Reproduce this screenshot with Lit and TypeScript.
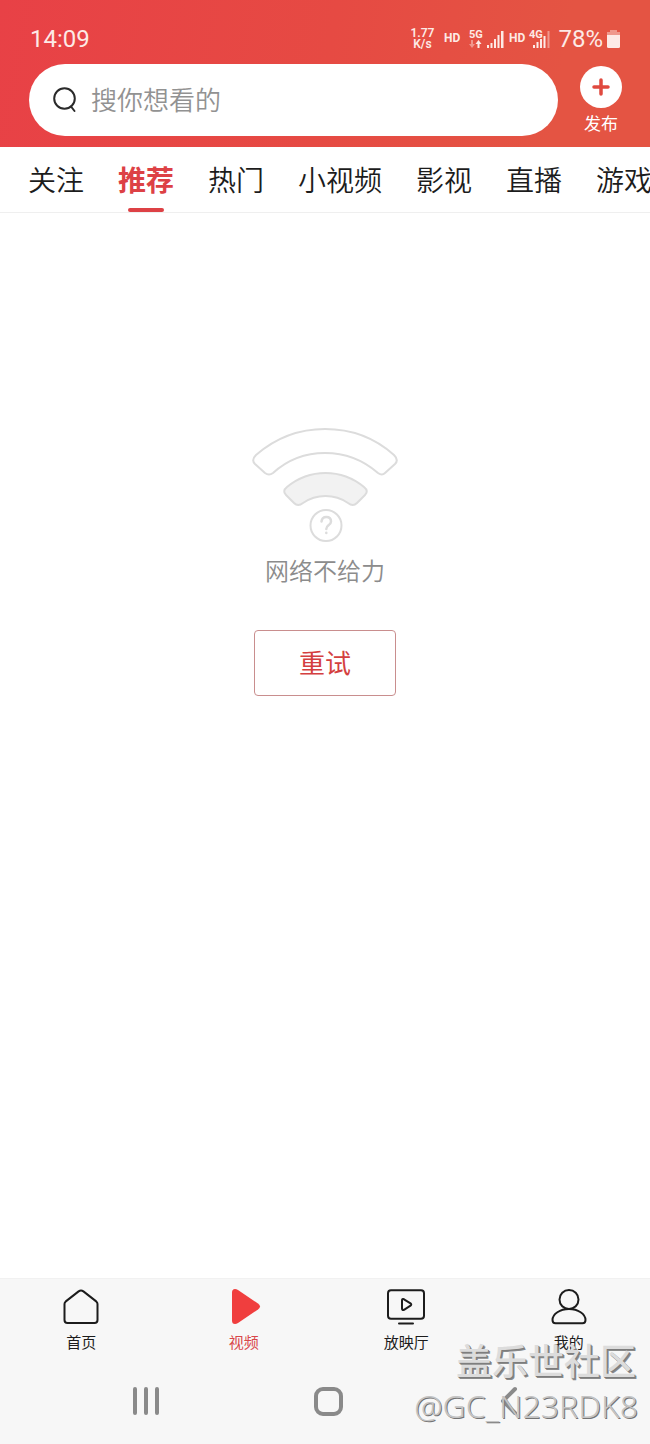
import { LitElement, html, css, svg } from "lit";
import { customElement, state } from "lit/decorators.js";
import { classMap } from "lit/directives/class-map.js";

const CHANNELS = ["关注", "推荐", "热门", "小视频", "影视", "直播", "游戏"];

const NAV_ITEMS = [
  {
    label: "首页",
    icon: svg`<path d="M17.6 3.4 Q20 1.6 22.4 3.4 L35.2 13.4 Q36.5 14.5 36.5 16 V32 Q36.5 35 33.5 35 H6.500 Q3.500 35 3.500 32 V16 Q3.500 14.500 4.800 13.400 Z"/>`,
  },
  {
    label: "视频",
    icon: svg`<path class="solid" d="M8 4.500 Q8 1 11 1 Q12.400 1 14 2 L34 15.500 Q38 18.500 34 21.500 L14 35 Q12.400 36 11 36 Q8 36 8 32.500 Z"/>`,
  },
  {
    label: "放映厅",
    icon: svg`<rect x="2" y="2.200" width="36" height="28.600" rx="3"/><path d="M16 12.500 Q16 10.500 18 11.300 L24.500 15.300 Q26 16.500 24.500 17.700 L18 21.800 Q16 22.500 16 20.500 Z M13 35.500 H27"/>`,
  },
  {
    label: "我的",
    icon: svg`<circle cx="20" cy="11.500" r="9.500"/><path d="M20 21 C29 21 36.500 26 36.500 32 Q36.500 35.200 33.500 35.200 H6.500 Q3.500 35.200 3.500 32 C3.500 26 11 21 20 21 Z"/>`,
  },
];

@customElement("app-root")
export class AppRoot extends LitElement {
  static styles = css`
    :host {
      display: flex;
      flex-direction: column;
      position: relative;
      min-height: 100vh;
      background: #fff;
      color: #1c1c1c;
      font-family: Roboto, "Noto Sans CJK SC", sans-serif;
      overflow: hidden;
    }
    * {
      box-sizing: border-box;
    }
    button {
      margin: 0;
      padding: 0;
      border: 0;
      background: none;
      color: inherit;
      font: inherit;
      cursor: pointer;
    }
    svg {
      display: block;
      flex: none;
    }
    .header {
      background: linear-gradient(100deg, #e84146 0%, #e64a43 50%, #e45443 85%);
      color: #fff;
      padding-bottom: 11px;
    }
    .status {
      display: flex;
      align-items: center;
      justify-content: space-between;
      height: 64px;
      padding: 14px 30px 0;
      font-size: 24px;
      line-height: 28px;
      color: #fdeae6;
    }
    .indicators {
      display: flex;
      align-items: center;
    }
    .speed {
      display: flex;
      flex-direction: column;
      width: 24px;
      margin-right: 10px;
      font-size: 12px;
      font-weight: 600;
      line-height: 11px;
      text-align: center;
    }
    .percent {
      margin: 0 4px 0 7px;
    }
    .cell {
      fill: #fdeae6;
      font: 700 12px Roboto, sans-serif;
    }
    .cell .gen {
      font-size: 11px;
    }
    .dim {
      opacity: 0.45;
    }
    .toolbar {
      display: flex;
      align-items: center;
      gap: 18px;
      padding: 0 24px 0 29px;
    }
    .search {
      display: flex;
      flex: 1;
      align-items: center;
      gap: 12px;
      height: 72px;
      padding: 0 24px 2px;
      border-radius: 36px;
      background: #fff;
      min-width: 0;
    }
    .search svg {
      fill: none;
      stroke: #2a2a2a;
      stroke-width: 2;
      stroke-linecap: round;
    }
    .search input {
      flex: 1;
      min-width: 0;
      padding: 0;
      border: 0;
      outline: 0;
      background: none;
      color: #1c1c1c;
      font: 350 26px/40px "Noto Sans CJK SC", sans-serif;
    }
    .search input::placeholder {
      color: #929292;
      opacity: 1;
    }
    .publish {
      display: flex;
      flex-direction: column;
      align-items: center;
      gap: 5px;
      width: 50px;
      font-size: 17px;
      line-height: 22px;
    }
    .tabs {
      display: flex;
      gap: 34px;
      padding: 0 28px;
      height: 66px;
      border-bottom: 1px solid #efefef;
      overflow: hidden;
    }
    .tab {
      display: flex;
      flex: none;
      flex-direction: column;
      align-items: center;
      justify-content: space-between;
      padding-top: 15px;
      font-size: 28px;
      font-weight: 350;
      line-height: 40px;
      white-space: nowrap;
    }
    .tab::after {
      content: "";
      width: 36px;
      height: 4px;
      border-radius: 2px;
    }
    .tab.active {
      color: #dd4145;
      font-weight: 700;
    }
    .tab.active::after {
      background: #dd4145;
    }
    .content {
      display: flex;
      flex: 1;
      flex-direction: column;
      align-items: center;
      padding-top: 213px;
    }
    .offline {
      fill: none;
      stroke: #dcdcdc;
      stroke-width: 2;
      stroke-linecap: round;
      stroke-linejoin: round;
    }
    .offline .shade {
      fill: #f2f2f2;
    }
    .message {
      margin: 10px 0 40px;
      color: #8c8c8c;
      font-size: 24px;
      font-weight: 350;
      line-height: 36px;
    }
    .retry {
      width: 142px;
      height: 66px;
      padding-top: 2px;
      border: 1px solid #c98e8e;
      border-radius: 4px;
      color: #d43f40;
      font-size: 26px;
      line-height: 40px;
    }
    .footer {
      background: #f7f7f7;
      border-top: 1px solid #f1f1f1;
    }
    .nav {
      display: grid;
      grid-template-columns: repeat(4, 1fr);
      padding-top: 9px;
    }
    .item {
      display: flex;
      flex-direction: column;
      align-items: center;
      gap: 5px;
      color: #1c1c1c;
      font-size: 15px;
      line-height: 24px;
      text-decoration: none;
    }
    .item svg {
      fill: none;
      stroke: currentColor;
      stroke-width: 2;
      stroke-linecap: round;
      stroke-linejoin: round;
    }
    .item .solid {
      fill: #f03e3e;
      stroke: none;
    }
    .item.active {
      color: #d9474a;
    }
    .system {
      display: flex;
      justify-content: center;
      gap: 152px;
      padding: 31px 0 28px 6px;
    }
    .system svg {
      fill: none;
      stroke: #8a8a8a;
      stroke-width: 4;
      stroke-linecap: round;
      stroke-linejoin: round;
    }
    .watermark {
      position: absolute;
      right: 12px;
      bottom: 16px;
      display: flex;
      flex-direction: column;
      align-items: flex-end;
      color: #dcdcdc;
      pointer-events: none;
      text-shadow: 1px 1px 0 #7c7c7c, 2px 2px 0 #8a8a8a;
    }
    .community {
      padding-right: 2px;
      font: 500 36px/50px "Noto Sans CJK SC", sans-serif;
    }
    .author {
      font: 300 32px/44px "Noto Sans", sans-serif;
      color: #c4c4c4;
      text-shadow: 1px 1px 0 #747474;
    }
  `;

  @state() private channel = "推荐";
  @state() private page = "视频";

  render() {
    return html`
      <header class="header">
        <div class="status">
          <span>14:09</span>
          <div class="indicators">
            <span class="speed"><span>1.77</span><span>K/s</span></span>
            <svg class="cell" width="60" height="20" viewBox="0 0 60 20" aria-hidden="true">
              <text x="0" y="13">HD</text>
              <text class="gen" x="25" y="9">5G</text>
              <path class="dim" d="M27 11h2v4h2l-3 4-3-4h2z" />
              <path d="M33.500 19h2v-4h2l-3-4-3 4h2z" />
              <path d="M43 16h2v3h-2zM46.500 14h2v5h-2zM50 10h2v9h-2zM53.500 6h2v13h-2zM57 2h2.500v17H57z" />
            </svg>
            <svg class="cell" width="47" height="20" viewBox="1 0 47 20" aria-hidden="true">
              <text x="6" y="13">HD</text>
              <text class="gen" x="26" y="9">4G</text>
              <path d="M30 16h2v3h-2zM33.500 13h2v6h-2zM37 10h2v9h-2zM40.500 7h2v12h-2z" />
              <path class="dim" d="M44.500 2h2v17h-2z" />
            </svg>
            <span class="percent">78%</span>
            <svg class="cell" width="13" height="20" viewBox="0 0 13 20" aria-hidden="true">
              <path class="dim" d="M3 1h7v2h3v3H0V3h3z" />
              <path d="M0 6h13v11.500q0 1.500-1.500 1.500h-10Q0 19 0 17.500z" />
            </svg>
          </div>
        </div>
        <div class="toolbar">
          <label class="search">
            <svg width="26" height="28" viewBox="0 0 26 28" aria-hidden="true">
              <circle cx="11.500" cy="13.500" r="10.300" />
              <path d="M18 21.500 21.500 26" />
            </svg>
            <input type="search" placeholder="搜你想看的" aria-label="搜索" />
          </label>
          <button class="publish">
            <svg width="42" height="42" viewBox="0 0 42 42" aria-hidden="true">
              <circle cx="21" cy="21" r="21" fill="#fff" />
              <path d="M21 14v14M14 21h14" stroke="#e0493f" stroke-width="3.500" stroke-linecap="round" />
            </svg>
            发布
          </button>
        </div>
      </header>
      <nav class="tabs">
        ${CHANNELS.map(
          (name) => html`<button
            class=${classMap({ tab: true, active: name === this.channel })}
            @click=${() => (this.channel = name)}
          >${name}</button>`
        )}
      </nav>
      <main class="content">
        <svg class="offline" width="148" height="118" viewBox="0 0 148 118" aria-hidden="true">
          <path d="M5 29Q35 3 74 3Q114 3 143 29Q148 34 144 38L134 47Q131 50 127 47Q104 27 74 27Q44 27 22 47Q18 50 14 47L4 38Q0 34 5 29Z" />
          <path class="shade" d="M36 61Q53 47 74.500 47Q96 47 113 61Q118 65 114 69L106 77Q102 81 97 77Q87 70 74.500 70Q62 70 52 77Q47 81 43 77L35 69Q31 65 36 61Z" />
          <circle cx="75" cy="99.500" r="15.500" />
          <path stroke-width="2.500" d="M70.500 95.500Q71 91 75.300 91Q80 91 80 95.500Q80 97.500 77.500 99.300Q75.300 101 75.300 103M75.300 106.700v.2" />
        </svg>
        <p class="message">网络不给力</p>
        <button class="retry">重试</button>
      </main>
      <footer class="footer">
        <nav class="nav">
          ${NAV_ITEMS.map(
            ({ label, icon }) => html`<a
              href="#"
              class=${classMap({ item: true, active: label === this.page })}
              @click=${(e: Event) => {
                e.preventDefault();
                this.page = label;
              }}
            ><svg width="40" height="38" viewBox="0 0 40 38" aria-hidden="true">${icon}</svg>${label}</a>`
          )}
        </nav>
        <div class="system">
          <button aria-label="最近">
            <svg width="30" height="30" viewBox="0 0 30 30"><path d="M4 3v24M15 3v24M26 3v24" /></svg>
          </button>
          <button aria-label="主页">
            <svg width="30" height="30" viewBox="0 0 30 30"><rect x="3" y="3" width="25" height="25" rx="7" /></svg>
          </button>
          <button aria-label="返回">
            <svg width="30" height="30" viewBox="0 0 30 30"><path d="M20 3 8 15 20 27" /></svg>
          </button>
        </div>
      </footer>
      <div class="watermark">
        <span class="community">盖乐世社区</span>
        <span class="author">@GC_N23RDK8</span>
      </div>
    `;
  }
}
